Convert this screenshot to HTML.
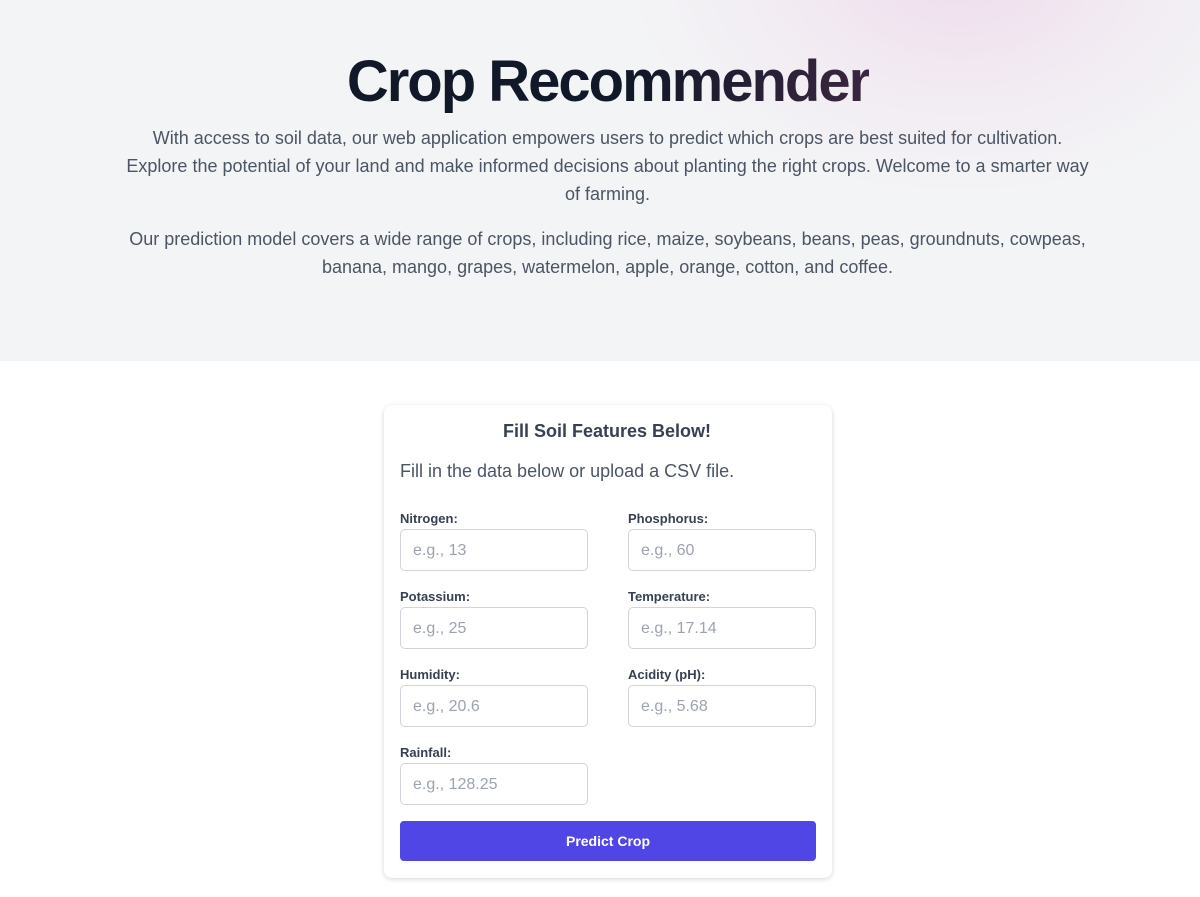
<!DOCTYPE html>
<html><head><meta charset="utf-8"><style>
*{box-sizing:border-box;margin:0;padding:0}
body{width:1200px;height:897px;background:#fff;font-family:"Liberation Sans",Arial,sans-serif;overflow:hidden;position:relative}
.hero{position:absolute;left:0;top:0;width:1200px;height:361px;background:#f3f4f6;overflow:hidden}
.glow{position:absolute;left:620px;top:-260px;width:680px;height:460px;border-radius:50%;background:radial-gradient(ellipse at center,rgba(236,205,230,.6) 0%,rgba(240,218,235,.3) 40%,rgba(243,244,246,0) 70%)}
h1{position:absolute;left:0;width:1200px;top:48px;text-align:center;font-size:58px;font-weight:700;letter-spacing:-2px;color:#111827;line-height:68px;padding-left:16px}
h1 span{background:linear-gradient(90deg,#111827 55%,#3b2640);-webkit-background-clip:text;color:transparent}
.p{position:absolute;left:0;width:1215px;text-align:center;font-size:18px;line-height:28px;color:#4b5563;white-space:nowrap}
.card{position:absolute;left:384px;top:405px;width:448px;height:473px;background:#fff;border-radius:8px;box-shadow:0 1px 4px rgba(0,0,0,.12),0 2px 8px rgba(0,0,0,.05)}
.t{position:absolute;width:448px;top:421px;text-align:center;font-size:18px;font-weight:700;color:#374151}
.s{position:absolute;left:400px;top:461px;font-size:18px;color:#4b5563}
.l{position:absolute;font-size:13px;font-weight:700;color:#374151}
.i{position:absolute;width:188px;height:42px;border:1px solid #d1d5db;border-radius:5px;font-size:16px;color:#9ca3af;padding:11px 12px;line-height:19px}
.b{position:absolute;left:400px;top:821px;width:416px;height:40px;background:#4f46e5;border-radius:4px;color:#fff;font-size:14px;font-weight:700;text-align:center;line-height:40px}
</style></head><body>
<div class="hero"><div class="glow"></div>
<h1><span>Crop Recommender</span></h1>
<div class="p" style="top:124px">With access to soil data, our web application empowers users to predict which crops are best suited for cultivation.<br>Explore the potential of your land and make informed decisions about planting the right crops. Welcome to a smarter way<br>of farming.</div>
<div class="p" style="top:225px">Our prediction model covers a wide range of crops, including rice, maize, soybeans, beans, peas, groundnuts, cowpeas,<br>banana, mango, grapes, watermelon, apple, orange, cotton, and coffee.</div>
</div>
<div class="card"></div>
<div class="t" style="left:383px">Fill Soil Features Below!</div>
<div class="s">Fill in the data below or upload a CSV file.</div>
<div class="l" style="left:400px;top:511px">Nitrogen:</div><div class="i" style="left:400px;top:529px">e.g., 13</div>
<div class="l" style="left:628px;top:511px">Phosphorus:</div><div class="i" style="left:628px;top:529px">e.g., 60</div>
<div class="l" style="left:400px;top:589px">Potassium:</div><div class="i" style="left:400px;top:607px">e.g., 25</div>
<div class="l" style="left:628px;top:589px">Temperature:</div><div class="i" style="left:628px;top:607px">e.g., 17.14</div>
<div class="l" style="left:400px;top:667px">Humidity:</div><div class="i" style="left:400px;top:685px">e.g., 20.6</div>
<div class="l" style="left:628px;top:667px">Acidity (pH):</div><div class="i" style="left:628px;top:685px">e.g., 5.68</div>
<div class="l" style="left:400px;top:745px">Rainfall:</div><div class="i" style="left:400px;top:763px">e.g., 128.25</div>
<div class="b">Predict Crop</div>
</body></html>
